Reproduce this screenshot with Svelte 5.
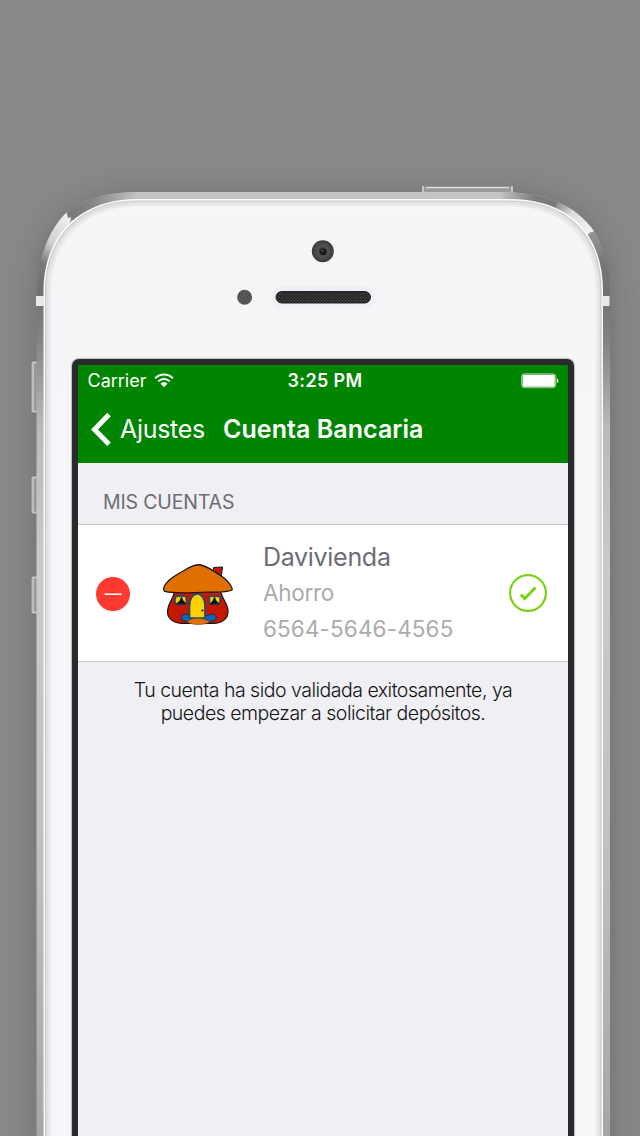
<script>
  const account = { bank: 'Davivienda', type: 'Ahorro', number: '6564-5646-4565' };
  const sideKeys = [
    { y: 361, h: 52 },
    { y: 476, h: 38 },
    { y: 576, h: 38 }
  ];
</script>

<main class="stage">
  <svg class="device" width="640" height="1136" viewBox="0 0 640 1136" aria-hidden="true">
    <defs>
      <linearGradient id="side" x1="0" y1="192" x2="0" y2="1136" gradientUnits="userSpaceOnUse">
        <stop offset="0" stop-color="#bdbdbd" />
        <stop offset=".04" stop-color="#999" />
        <stop offset=".075" stop-color="#777" />
        <stop offset=".11" stop-color="#717171" />
        <stop offset=".16" stop-color="#858585" />
        <stop offset=".25" stop-color="#b9bab9" />
        <stop offset=".4" stop-color="#c9cac9" />
        <stop offset=".7" stop-color="#bfc1bf" />
        <stop offset="1" stop-color="#a5a7a5" />
      </linearGradient>
      <linearGradient id="top" x1="65" x2="582" y1="0" y2="0" gradientUnits="userSpaceOnUse">
        <stop offset="0" stop-color="#777" />
        <stop offset=".05" stop-color="#838383" />
        <stop offset=".14" stop-color="#c3c3c3" />
        <stop offset=".84" stop-color="#c5c5c5" />
        <stop offset=".91" stop-color="#7c7c7c" />
        <stop offset="1" stop-color="#777" />
      </linearGradient>
      <linearGradient id="face" x1="0" y1="206" x2="0" y2="400" gradientUnits="userSpaceOnUse">
        <stop offset="0" stop-color="#f6f6f6" />
        <stop offset=".35" stop-color="#f5f5f5" />
        <stop offset=".5" stop-color="#f4f5f7" />
        <stop offset="1" stop-color="#f4f6f8" />
      </linearGradient>
      <linearGradient id="glintL" x1="40" y1="262" x2="67" y2="214" gradientUnits="userSpaceOnUse">
        <stop offset="0" stop-color="#777" />
        <stop offset=".4" stop-color="#cfcfcf" />
        <stop offset="1" stop-color="#f2f2f2" />
      </linearGradient>
      <linearGradient id="glintR" x1="557" y1="201" x2="594" y2="233" gradientUnits="userSpaceOnUse">
        <stop offset="0" stop-color="#858585" />
        <stop offset=".4" stop-color="#ddd" />
        <stop offset="1" stop-color="#f5f5f5" />
      </linearGradient>
      <radialGradient id="lens">
        <stop offset="0" stop-color="#222" />
        <stop offset=".3" stop-color="#333" />
        <stop offset=".45" stop-color="#555" />
        <stop offset="1" stop-color="#383838" />
      </radialGradient>
      <pattern id="mesh" width="3" height="3" patternUnits="userSpaceOnUse">
        <rect width="3" height="3" fill="#252525" />
        <path d="M0 0h1v1H0zM1.5 1.5h1v1h-1z" fill="#555" />
      </pattern>
      <clipPath id="body">
        <path d="M36.500 1136V300C37 262 46 235 64 215C84 197 108 192 145 192H500C542 192 573 202 594 231C606 249 610 272 610 300V1136Z" />
      </clipPath>
      <filter id="shade" x="-20%" y="-10%" width="140%" height="120%">
        <feGaussianBlur stdDeviation="15" />
      </filter>
    </defs>

    <path d="M37 1170V300C37 228 78 196 145 196H500C570 196 609 228 609 300V1170Z" fill="#000" opacity=".2" filter="url(#shade)" />

    {#each sideKeys as key}
      <rect x="30.500" y={key.y} width="9" height={key.h} rx="2.5" fill="#999" stroke="#777" stroke-width=".7" />
      <path d="M37 {key.y + 1.5}H33V{key.y + key.h - 1.5}H37" fill="none" stroke="#c9c9c9" stroke-width="1.5" />
    {/each}

    <path d="M422 193v-7h3v1h85v-1h3v7z" fill="#999" />
    <path d="M426 187.5h83M423 186v6M512 186v6" stroke="#ddd" stroke-width="1.3" />

    <g clip-path="url(#body)">
      <path d="M30 190H620V1136H30Z" fill="url(#side)" />
      <path d="M64 214L64 190H600V210L582 222L560 226H90L69 219Z" fill="url(#top)" />
      <path d="M36 264L50 210H66L68 218L71 217L66 240L45 276Z" fill="url(#glintL)" />
      <path d="M557 195H600L595 231L590 232.500L582 240L555 215Z" fill="url(#glintR)" />
    </g>

    <path d="M43.5 1136V291C43.5 235 80 199 137 199H510C570 199 603 235 603 291V1136Z" fill="#fbfbfb" />
    <path d="M45.5 1136V291C45.5 237 81 201 137 201H510C569 201 601 237 601 291V1136" fill="#dfe0e2" stroke="#c9cbcc" stroke-width="1.200" />
    <path d="M48 1136V291C48 238 83 203.5 138 203.5H509C567 203.5 599 238 599 291V1136" fill="#e9eaee" stroke="#e0e1e5" stroke-width="1" />
    <path d="M51 1136V291C51 240 86 206 139 206H508C564 206 596 240 596 291V1136Z" fill="url(#face)" />
    <path d="M36 296h8v10h-8zM601 296h8.500v10H601z" fill="#e9e9e9" />

    <circle cx="322.800" cy="251.300" r="11" fill="url(#lens)" />
    <circle cx="323.500" cy="252" r="3.200" fill="#1c1c1c" />
    <circle cx="322.500" cy="250.800" r=".9" fill="#666" />
    <circle cx="244.600" cy="297.200" r="7.500" fill="#555" />
    <rect x="271" y="286" width="104" height="23" rx="11.500" fill="#eef0f5" />
    <rect x="276" y="291.500" width="94.500" height="11.500" rx="5.750" fill="url(#mesh)" stroke="#242424" />
  </svg>

  <section class="screen">
    <header>
      <div class="status">
        <span class="carrier">Carrier</span>
        <svg class="wifi" width="20" height="15" viewBox="0 0 20 15" fill="none" stroke="#fff" stroke-width="2">
          <path d="M1.200 5.200C6.100.3 13.900.3 18.800 5.200M4.300 8.400c3.200-3.100 8.200-3.100 11.400 0" />
          <path d="M6.500 10.700c2-1.900 5-1.900 7 0L10 14.300z" fill="#fff" stroke="none" />
        </svg>
        <span class="time">3:25 PM</span>
        <svg class="battery" width="38" height="16" viewBox="0 0 38 16">
          <rect x=".7" y=".9" width="34" height="13.800" rx="2.500" fill="none" stroke="#a6d4a6" />
          <rect x="1.600" y="1.800" width="32.200" height="12" rx="1.300" fill="#fff" />
          <path d="M35.800 5.500c2.100.4 2.100 4.200 0 4.600z" fill="#fff" />
        </svg>
      </div>
      <nav>
        <svg width="20" height="33" viewBox="0 0 20 33" fill="none" stroke="#fff" stroke-width="5">
          <path d="M18 1.500 3.500 16.400 18 31.300" />
        </svg>
        <span class="back">Ajustes</span>
        <h1>Cuenta Bancaria</h1>
      </nav>
    </header>

    <h2>MIS CUENTAS</h2>

    <article class="account">
      <svg class="remove" width="36" height="38" viewBox="0 0 36 38">
        <circle cx="18" cy="19.500" r="17" fill="#f3f3f3" />
        <circle cx="18" cy="18" r="17" fill="#ff3b30" />
        <path d="M9.500 18.200h17" stroke="#fff" stroke-width="1.500" />
      </svg>
      <svg class="house" width="72" height="64" viewBox="0 0 72 64" stroke="#171717" stroke-linejoin="round">
        <path d="M51.500 4.500 60.500 4 59 16l-8-6z" fill="#c31700" stroke-width="1" />
        <path d="M12.500 27C12 37 6 39 5.500 48c-.2 7 5 12 14 12.300h33C61 60 66.500 55 66 47.500 65.500 39 59 36 58.500 26z" fill="#c31700" stroke-width="1.200" />
        <path d="M23 51c-4 0-4 4-3 6l10 3h15l8-3c2-2 2-5-3-6L42 53H29z" fill="#0866bd" stroke-width=".6" />
        <path d="M27.500 55V43c0-16 15.500-16 15.500 0v12z" fill="#ffd000" stroke="#174d7b" stroke-width="1.700" />
        <path d="M13.500 34c3-1.200 7-1.200 10.500-.5l.5 7.500-9.500.8c-2-1.500-2.300-5-1.500-7.800zM47.500 33.500c3.200-.8 7-.7 10.500.5.600 3.600-.3 6-1.800 7.800l-8.700-1z" fill="#ffd000" stroke="#174d7b" stroke-width="1.600" />
        <path d="m19.500 34.300-1 3-3.500 3.500 8.500-.200-3-3.300zM52.500 34.300l-1 3-3 3.500 8-.200-3-3.300z" fill="#080808" stroke-width="1.200" />
        <path d="M25 59c3.500-5 18-5 22.500 0-5 3.500-17.500 3.500-22.500 0z" fill="#df7000" stroke-width=".3" />
        <path d="M2 24C5 17 14 12 23 7 30 3 34 1 39 2c8 2 16 8 23 13 5 4 9 10 8 12-7 3-14 2-25 2.200-17 .3-32 1.800-42-.9C1.500 28 1.500 26 2 24z" fill="#df7000" stroke-width="1.300" />
        <circle cx="40.500" cy="47.500" r="1.100" fill="#171717" stroke="none" />
      </svg>
      <div class="details">
        <strong>{account.bank}</strong>
        <span class="type">{account.type}</span>
        <span class="number">{account.number}</span>
      </div>
      <svg class="check" width="40" height="40" viewBox="0 0 40 40" fill="none" stroke="#78d316">
        <circle cx="20" cy="20" r="17.900" stroke-width="2.200" />
        <path d="m12.800 21.600 3.900 3.900L27.500 14.500" stroke-width="3" />
      </svg>
    </article>

    <p>Tu cuenta ha sido validada exitosamente, ya<br />puedes empezar a solicitar depósitos.</p>
  </section>
</main>

<style>
  :global(body) { margin: 0; background: #888; }
  * { box-sizing: border-box; }
  .stage {
    display: grid;
    width: 640px;
    height: 1136px;
    overflow: hidden;
    background: #888;
    font-family: Inter, "Liberation Sans", sans-serif;
  }
  .device, .screen { grid-area: 1 / 1; }
  .device { display: block; }
  .screen {
    width: 502px;
    height: 777px;
    margin: 359px 0 0 72px;
    border: 6px solid #282a2b;
    border-bottom: 0;
    border-radius: 7px 7px 0 0;
    background: #efeff4;
    box-shadow: 0 0 1px 1px #bbb;
  }
  header {
    height: 98px;
    background: #008500;
    color: #fff;
  }
  .status {
    display: flex;
    align-items: center;
    height: 31px;
    padding: 0 9px 0 9.500px;
    font-size: 18px;
    white-space: nowrap;
  }
  .carrier { width: 59px; letter-spacing: 0; }
  .wifi { margin: 0 0 1px 7px; }
  .time { width: 76px; margin-left: 114px; font-weight: 600; letter-spacing: .35px; }
  .battery { margin-left: auto; }
  nav {
    display: flex;
    align-items: center;
    height: 66px;
    padding-left: 12.500px;
    white-space: nowrap;
  }
  .back { width: 87px; margin-left: 9.500px; font-size: 25px; letter-spacing: -.3px; }
  h1 { margin: 0 0 0 16px; font-size: 25px; font-weight: 600; letter-spacing: .05px; }
  h2 {
    display: flex;
    align-items: flex-end;
    height: 61px;
    margin: 0;
    padding: 0 0 10px 25px;
    color: #6d6d72;
    font-size: 19.500px;
    line-height: 24px;
    font-weight: 400;
    letter-spacing: -.15px;
  }
  .account {
    display: flex;
    align-items: center;
    height: 138px;
    padding: 0 20px 0 17px;
    border: solid #cbcbcf;
    border-width: 1px 0;
    background: #fff;
  }
  .remove { margin-top: 3px; }
  .house { margin: 3px 0 0 31px; }
  .details { display: flex; flex-direction: column; margin-left: 29px; white-space: nowrap; }
  strong, .type, .number { height: 36px; line-height: 36px; }
  strong { color: #6d6d76; font-size: 25px; font-weight: 400; letter-spacing: -.3px; }
  .type, .number { color: #ababab; font-size: 22.500px; }
  .type { letter-spacing: -.3px; }
  .number { letter-spacing: .12px; }
  .check { margin-left: auto; }
  p {
    margin: 17px 0 0;
    color: #151517;
    font-size: 19.500px;
    font-weight: 300;
    line-height: 23px;
    letter-spacing: -.5px;
    text-align: center;
    white-space: nowrap;
  }
</style>
